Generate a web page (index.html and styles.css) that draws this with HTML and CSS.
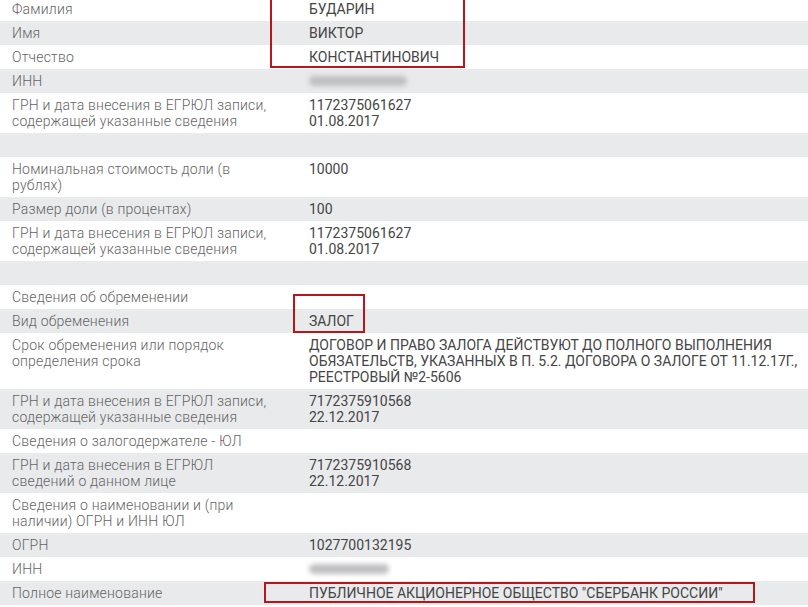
FILE: index.html
```html
<!DOCTYPE html>
<html lang="ru">
<head>
  <meta charset="UTF-8" />
  <meta name="viewport" content="width=device-width, initial-scale=1.0"/>
  <title>Сведения ЕГРЮЛ</title>
  <link rel="stylesheet" href="styles.css">
</head>
<body>
  <div class="sheet">
    <div class="row"><div class="label">Фамилия</div><div class="value">БУДАРИН</div></div>
    <div class="row"><div class="label">Имя</div><div class="value">ВИКТОР</div></div>
    <div class="row"><div class="label">Отчество</div><div class="value">КОНСТАНТИНОВИЧ</div></div>
    <div class="row"><div class="label">ИНН</div><div class="value"><span class="blur blur-long"></span></div></div>
    <div class="row"><div class="label">ГРН и дата внесения в ЕГРЮЛ записи, содержащей указанные сведения</div><div class="value">1172375061627<br>01.08.2017</div></div>
    <div class="row"><div class="label"></div><div class="value"></div></div>
    <div class="row"><div class="label">Номинальная стоимость доли (в рублях)</div><div class="value">10000</div></div>
    <div class="row"><div class="label">Размер доли (в процентах)</div><div class="value">100</div></div>
    <div class="row"><div class="label">ГРН и дата внесения в ЕГРЮЛ записи, содержащей указанные сведения</div><div class="value">1172375061627<br>01.08.2017</div></div>
    <div class="row"><div class="label"></div><div class="value"></div></div>
    <div class="row"><div class="label">Сведения об обременении</div><div class="value"></div></div>
    <div class="row"><div class="label">Вид обременения</div><div class="value">ЗАЛОГ</div></div>
    <div class="row"><div class="label">Срок обременения или порядок определения срока</div><div class="value">ДОГОВОР И ПРАВО ЗАЛОГА ДЕЙСТВУЮТ ДО ПОЛНОГО ВЫПОЛНЕНИЯ<br>ОБЯЗАТЕЛЬСТВ, УКАЗАННЫХ В П. 5.2. ДОГОВОРА О ЗАЛОГЕ ОТ 11.12.17Г.,<br>РЕЕСТРОВЫЙ №2-5606</div></div>
    <div class="row"><div class="label">ГРН и дата внесения в ЕГРЮЛ записи, содержащей указанные сведения</div><div class="value">7172375910568<br>22.12.2017</div></div>
    <div class="row"><div class="label">Сведения о залогодержателе - ЮЛ</div><div class="value"></div></div>
    <div class="row"><div class="label">ГРН и дата внесения в ЕГРЮЛ сведений о данном лице</div><div class="value">7172375910568<br>22.12.2017</div></div>
    <div class="row"><div class="label">Сведения о наименовании и (при наличии) ОГРН и ИНН ЮЛ</div><div class="value"></div></div>
    <div class="row"><div class="label">ОГРН</div><div class="value">1027700132195</div></div>
    <div class="row"><div class="label">ИНН</div><div class="value"><span class="blur blur-short"></span></div></div>
    <div class="row"><div class="label">Полное наименование</div><div class="value">ПУБЛИЧНОЕ АКЦИОНЕРНОЕ ОБЩЕСТВО "СБЕРБАНК РОССИИ"</div></div>

    <!-- пометки поверх скриншота -->
    <div class="mark mark-fio"></div>
    <div class="mark mark-zalog"></div>
    <div class="mark mark-name"></div>
  </div>
</body>
</html>
```

FILE: styles.css
```css
body {
  margin: 0;
  background: #fff;
  font-family: Roboto, "Liberation Sans", sans-serif;
  font-size: 14px;
  line-height: 16px;
  overflow: hidden;
}
.sheet {
  position: relative;
  margin-top: -3px;
}
.row {
  display: grid;
  grid-template-columns: 297px 1fr;
  min-height: 16px;
  padding: 4px 0;
  background: #fff;
}
.row:nth-child(even) {
  background: #e9eaec;
}
.label {
  padding-left: 12px;
  padding-right: 26px;
  color: #646464;
  font-weight: 300;
  letter-spacing: 0.2px;
}
.value {
  padding-left: 12px;
  color: #454545;
}
.blur {
  display: inline-block;
  height: 10px;
  margin-top: 3px;
  border-radius: 5px;
  background: #bfbfc2;
  filter: blur(2.5px);
}
.blur-long {
  width: 98px;
}
.blur-short {
  width: 80px;
}
.mark {
  position: absolute;
  border: 2px solid #b8161c;
}
.mark-fio {
  left: 270px;
  top: -6px;
  width: 191px;
  height: 73px;
}
.mark-zalog {
  left: 293px;
  top: 297px;
  width: 68px;
  height: 35px;
}
.mark-name {
  left: 264px;
  top: 585px;
  width: 487px;
  height: 17px;
}
```
